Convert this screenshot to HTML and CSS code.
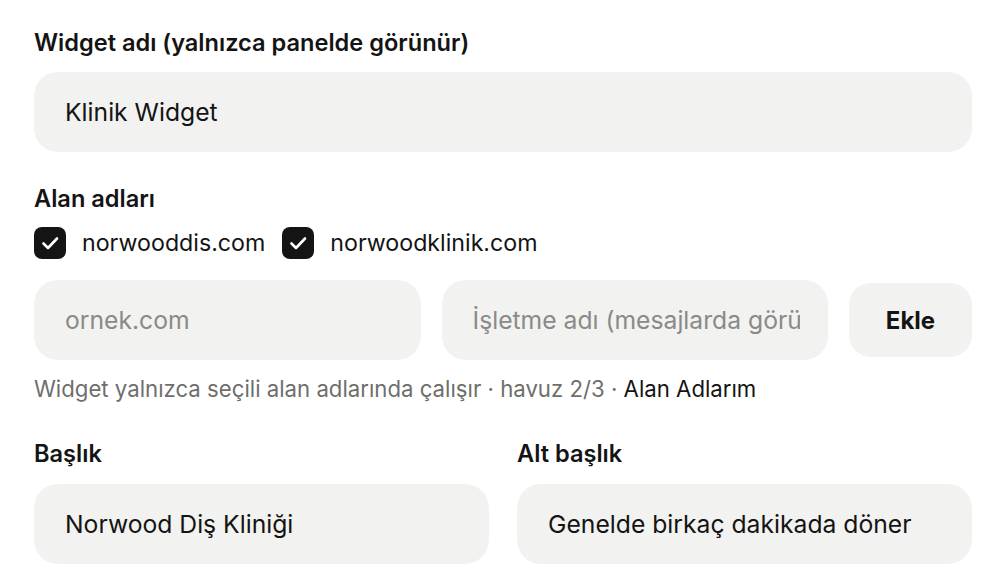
FILE: index.html
```html
<!DOCTYPE html>
<html lang="tr">
<head>
<meta charset="utf-8">
<title>Widget ayarları</title>
<link rel="stylesheet" href="styles.css">
</head>
<body>
<main class="form">
  <section class="field">
    <div class="label">Widget adı (yalnızca panelde görünür)</div>
    <div class="input"><span class="input-text">Klinik Widget</span></div>
  </section>

  <section class="field field-domains">
    <div class="label">Alan adları</div>
    <div class="checks">
      <label class="check">
        <span class="box"><svg viewBox="0 0 32 32" width="32" height="32"><path d="M9.5 16.5l4.5 4.5 9-9.5" fill="none" stroke="#fff" stroke-width="2.6" stroke-linecap="round" stroke-linejoin="round"/></svg></span>
        <span class="check-text">norwooddis.com</span>
      </label>
      <label class="check">
        <span class="box"><svg viewBox="0 0 32 32" width="32" height="32"><path d="M9.5 16.5l4.5 4.5 9-9.5" fill="none" stroke="#fff" stroke-width="2.6" stroke-linecap="round" stroke-linejoin="round"/></svg></span>
        <span class="check-text">norwoodklinik.com</span>
      </label>
    </div>
    <div class="add-row">
      <div class="input"><span class="input-text placeholder">ornek.com</span></div>
      <div class="input"><span class="input-text placeholder">İşletme adı (mesajlarda görünür)</span></div>
      <button class="btn">Ekle</button>
    </div>
    <p class="hint">Widget yalnızca seçili alan adlarında çalışır · havuz 2/3 · <span class="hint-link">Alan Adlarım</span></p>
  </section>

  <section class="two-col">
    <div class="field">
      <div class="label">Başlık</div>
      <div class="input"><span class="input-text">Norwood Diş Kliniği</span></div>
    </div>
    <div class="field">
      <div class="label">Alt başlık</div>
      <div class="input"><span class="input-text">Genelde birkaç dakikada döner</span></div>
    </div>
  </section>
</main>
</body>
</html>
```
FILE: styles.css
```css
* { box-sizing: border-box; }

html, body {
  margin: 0;
  background: #ffffff;
}

body {
  font-family: Inter, "Noto Sans", "Liberation Sans", sans-serif;
  color: #141414;
  padding: 28px 34px 0;
}

.form {
  width: 938px;
}

.label {
  font-size: 23.6px;
  font-weight: 600;
  line-height: 30px;
  margin-bottom: 14px;
  color: #141414;
}

.input {
  height: 80px;
  background: #f2f2f0;
  border-radius: 24px;
  padding: 0 28px 0 31px;
  display: flex;
  align-items: center;
  min-width: 0;
}

.input-text {
  display: block;
  font-size: 24.7px;
  line-height: 32px;
  white-space: nowrap;
  overflow: hidden;
  min-width: 0;
  flex: 1;
  color: #141414;
}

.input-text.placeholder {
  color: #8a8a88;
}

.field-domains {
  margin-top: 32px;
}

.checks {
  display: flex;
  gap: 17px;
  margin-top: -1px;
}

.check {
  display: flex;
  align-items: center;
  gap: 16px;
  height: 32px;
}

.box {
  width: 32px;
  height: 32px;
  border-radius: 8px;
  background: #141414;
  display: block;
}

.box svg { display: block; }

.check-text {
  font-size: 23.2px;
  line-height: 32px;
}

.add-row {
  display: grid;
  grid-template-columns: 1fr 1fr 123px;
  gap: 21px;
  align-items: center;
  margin-top: 21px;
}

.btn {
  height: 74px;
  border: 0;
  border-radius: 22px;
  background: #f2f2f0;
  font-family: inherit;
  font-size: 24px;
  font-weight: 700;
  color: #141414;
  padding: 0;
}

.hint {
  margin: 14px 0 0;
  font-size: 22.2px;
  line-height: 30px;
  color: #6e6e6c;
}

.hint-link {
  color: #141414;
}

.two-col {
  display: grid;
  grid-template-columns: 1fr 1fr;
  gap: 28px;
  margin-top: 35px;
}

.two-col .label {
  margin-bottom: 15px;
}
```
